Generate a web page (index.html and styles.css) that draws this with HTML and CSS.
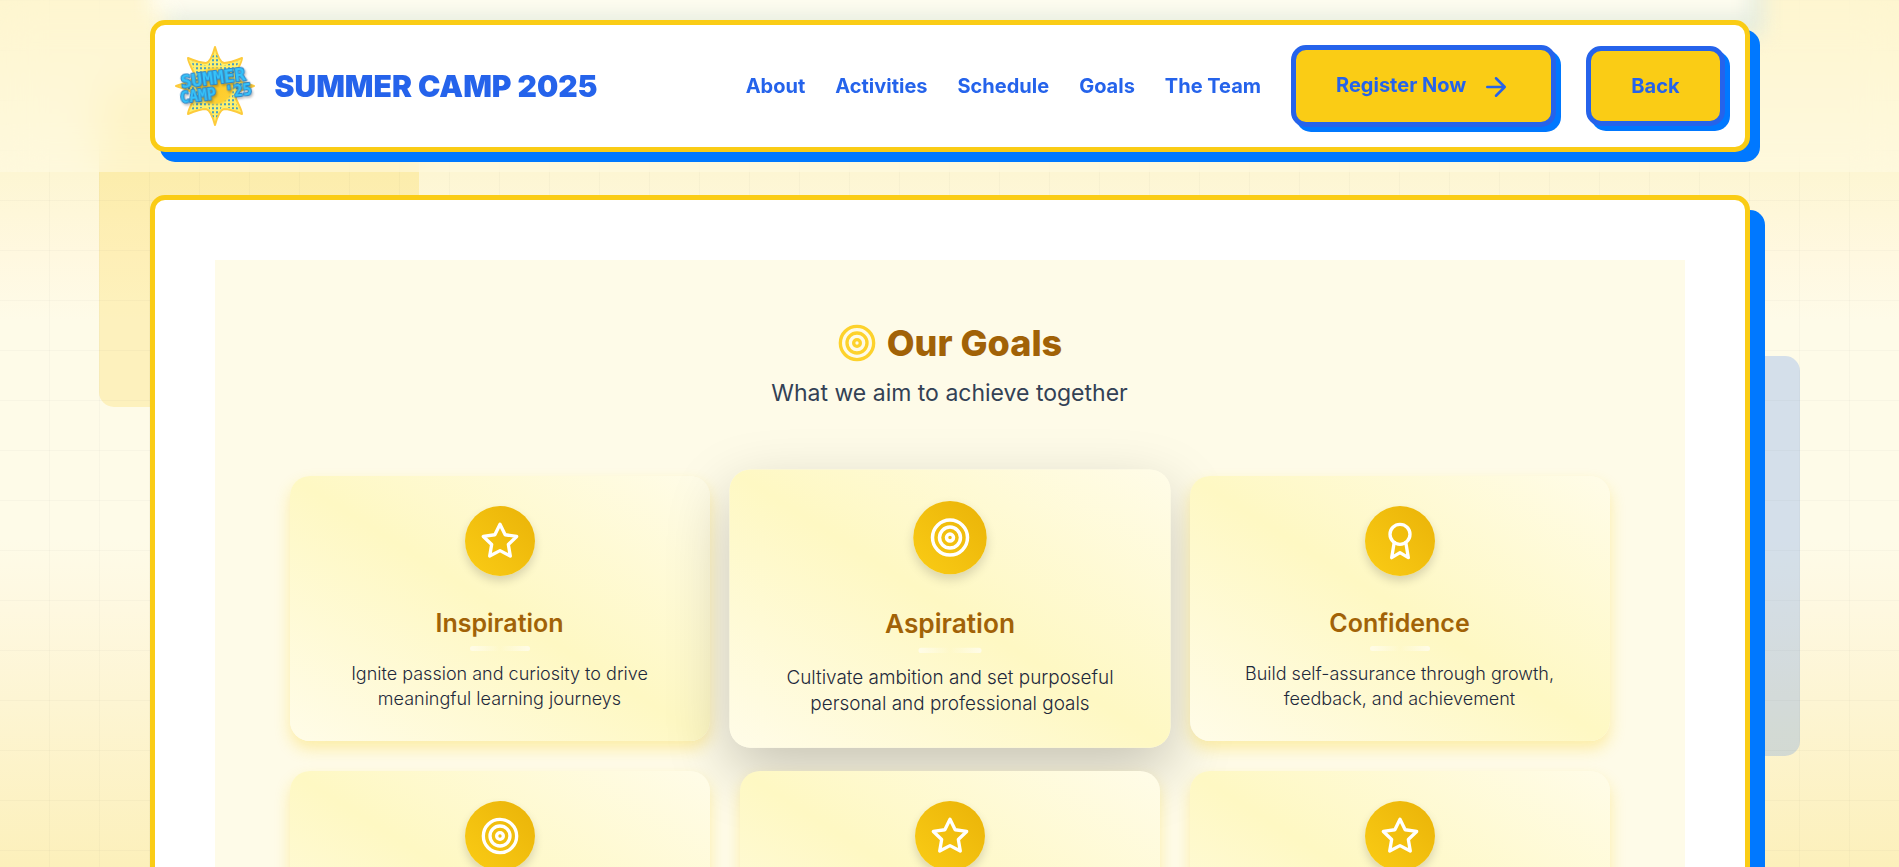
FILE: index.html
```html
<!DOCTYPE html>
<html lang="en">
<head>
<meta charset="utf-8">
<title>Summer Camp 2025</title>
<link rel="stylesheet" href="styles.css">
</head>
<body>
<svg class="sprite" aria-hidden="true">
  <symbol id="star" viewBox="0 0 24 24"><path d="M12 2l3.09 6.26L22 9.27l-5 4.87 1.18 6.88L12 17.77l-6.18 3.25L7 14.14 2 9.27l6.91-1.01L12 2z"/></symbol>
  <symbol id="target" viewBox="0 0 24 24"><circle cx="12" cy="12" r="10"/><circle cx="12" cy="12" r="6"/><circle cx="12" cy="12" r="2"/></symbol>
  <symbol id="award" viewBox="0 0 24 24"><circle cx="12" cy="8" r="6"/><path d="M15.477 12.89 17 22l-5-3-5 3 1.523-9.11"/></symbol>
  <symbol id="arrow" viewBox="0 0 24 24"><path d="M5 12h14M12 5l7 7-7 7"/></symbol>
</svg>
<div class="backdrop" aria-hidden="true">
  <div class="block block-yellow"></div>
  <div class="block block-blue"></div>
  <div class="grid-lines"></div>
</div>
<header class="site-header">
  <div class="previous-panel" aria-hidden="true"></div>
  <div class="bar">
    <a class="brand" href="#top">
      <svg class="logo" viewBox="0 0 80 80" aria-hidden="true">
        <defs>
          <pattern id="dots" width="4" height="4" patternUnits="userSpaceOnUse"><rect x="1" y="1" width="2" height="2.4" rx="1" fill="#3f9cc4"/></pattern>
          <radialGradient id="glow"><stop offset="0" stop-color="#ffc928"/><stop offset=".85" stop-color="#fdd033"/><stop offset="1" stop-color="#fdd033" stop-opacity="0"/></radialGradient>
        </defs>
        <path d="M40 1Q44 16 49 17Q55 17 67 12Q68 13 61 27Q61 33 67 36L79 40L67 44Q61 47 61 53Q68 67 67 68Q55 63 49 63Q44 64 40 79Q36 64 31 63Q25 63 13 68Q12 67 19 53Q19 47 13 44L1 40L13 36Q19 33 19 27Q12 13 13 12Q25 17 31 17Q36 16 40 1z" fill="#fff06a" stroke="#fdcb3c" stroke-width="2"/>
        <path d="M40 5 47 20 64 15 58 30 73 40 58 50 64 65 47 60 40 75 33 60 16 65 22 50 7 40 22 30 16 15 33 20z" fill="url(#dots)"/>
        <circle cx="40" cy="40" r="20" fill="url(#glow)"/>
        <g class="logo-word" transform="rotate(-7 40 40)">
          <text class="logo-top" x="39" y="38">SUMMER</text>
          <text class="logo-bottom" x="40" y="53">CAMP '25</text>
        </g>
      </svg>
      <span class="brand-name">SUMMER CAMP 2025</span>
    </a>
    <nav class="nav" aria-label="Main">
      <a href="#about">About</a>
      <a href="#activities">Activities</a>
      <a href="#schedule">Schedule</a>
      <a href="#goals">Goals</a>
      <a href="#team">The Team</a>
      <button class="btn" type="button">Register Now<svg class="btn-icon" aria-hidden="true"><use href="#arrow"/></svg></button>
      <button class="btn" type="button">Back</button>
    </nav>
  </div>
</header>
<main class="panel">
  <section class="goals" id="goals">
    <div class="heading">
      <h2><svg class="heading-icon" aria-hidden="true"><use href="#target"/></svg>Our Goals</h2>
      <p>What we aim to achieve together</p>
    </div>
    <div class="cards">
      <article class="card"><span class="badge"><svg><use href="#star"/></svg></span><h3>Inspiration</h3><p>Ignite passion and curiosity to drive meaningful learning journeys</p></article>
      <article class="card card-active"><span class="badge"><svg><use href="#target"/></svg></span><h3>Aspiration</h3><p>Cultivate ambition and set purposeful personal and professional goals</p></article>
      <article class="card"><span class="badge"><svg><use href="#award"/></svg></span><h3>Confidence</h3><p>Build self-assurance through growth, feedback, and achievement</p></article>
      <article class="card"><span class="badge"><svg><use href="#target"/></svg></span></article>
      <article class="card"><span class="badge"><svg><use href="#star"/></svg></span></article>
      <article class="card"><span class="badge"><svg><use href="#star"/></svg></span></article>
    </div>
  </section>
</main>
</body>
</html>
```
FILE: styles.css
```css
* { box-sizing: border-box; }

body {
  margin: 0;
  font-family: Inter, "Liberation Sans", sans-serif;
  font-size: 20px;
  line-height: 30px;
  color: #334155;
  background: #fefbe8;
}

h2, h3, p { margin: 0; }

.sprite { position: absolute; width: 0; height: 0; }

svg { fill: none; stroke-linecap: round; stroke-linejoin: round; }

.backdrop {
  position: fixed;
  inset: 0;
  z-index: -1;
  overflow: hidden;
  background: linear-gradient(180deg, #fcf0b8 0, #fdf6d3 172px, #fff8e0 255px, #fefbe8 320px, #fefbe8 540px, #fef8e0 610px, #fdf5d3 700px, #fcf0bb 867px);
}

.block { position: absolute; border-radius: 15px; }

.block-yellow {
  top: 87px;
  left: 99px;
  width: 320px;
  height: 320px;
  background: rgba(250, 204, 21, .2);
}

.block-blue {
  top: 356px;
  right: 99px;
  width: 400px;
  height: 400px;
  background: rgba(20, 100, 245, .18);
}

.grid-lines {
  position: absolute;
  inset: 0;
  background:
    linear-gradient(180deg, rgba(0, 0, 0, .025) 1px, transparent 1px) 0 0 / 50px 50px,
    repeating-linear-gradient(90deg, transparent 0 49px, rgba(0, 0, 0, .025) 49px 50px);
}

.site-header {
  position: relative;
  padding: 20px 40px;
  overflow: hidden;
  background: rgba(255, 252, 232, .5);
  backdrop-filter: blur(20px);
}

.previous-panel {
  position: absolute;
  z-index: -1;
  inset: -60px 150px auto;
  height: 75px;
  background: #fffdf0;
  box-shadow: 15px 20px 0 #e3ebdf;
  filter: blur(10px);
}

.bar {
  max-width: 1600px;
  margin: 0 auto;
  padding: 20px;
  display: flex;
  align-items: center;
  justify-content: space-between;
  background: #fff;
  border: 5px solid #facc15;
  border-radius: 15px;
  box-shadow: 10px 10px 0 #0078ff;
}

.brand {
  display: flex;
  align-items: center;
  gap: 20px;
  color: #2563eb;
  text-decoration: none;
}

.logo { width: 80px; height: 80px; overflow: visible; }

.logo-word {
  font-family: "DejaVu Sans Mono", monospace;
  font-weight: 700;
  text-anchor: middle;
  fill: #35c3fa;
  stroke: #2f86c8;
  stroke-width: 2px;
  paint-order: stroke;
  filter: drop-shadow(1px 2px 1px rgba(0, 0, 0, .25));
}

.logo-top { font-size: 18px; }

.logo-bottom { font-size: 15px; }

.brand-name { font-size: 30px; font-weight: 900; }

.nav {
  display: flex;
  align-items: center;
  gap: 30px;
  font-weight: 700;
}

.nav a { color: #2563eb; text-decoration: none; }

.btn {
  padding: 20px 40px;
  font: inherit;
  color: #2563eb;
  background: #facc15;
  border: 5px solid #2563eb;
  border-radius: 15px;
  box-shadow: 5px 5px 0 #0078ff;
}

.btn-icon {
  width: 30px;
  height: 30px;
  margin-left: 15px;
  vertical-align: middle;
  stroke: currentColor;
  stroke-width: 2;
}

.panel {
  position: relative;
  max-width: 1600px;
  margin: 23px auto 60px;
  padding: 60px;
  background: #fff;
  border: 5px solid #facc15;
  border-radius: 15px;
  box-shadow: 15px 15px 0 #0078ff;
}

.goals {
  padding: 60px 75px 75px;
  background: #fefbe8;
}

.heading {
  display: grid;
  gap: 10px;
  justify-items: center;
  padding-bottom: 65px;
}

.heading h2 {
  display: flex;
  align-items: center;
  gap: 10px;
  font-size: 36px;
  line-height: 46px;
  font-weight: 800;
  color: #a16207;
}

.heading-icon { width: 40px; height: 40px; stroke: #fdd22c; stroke-width: 2; }

.heading p { font-size: 23px; line-height: 35px; }

.cards {
  display: grid;
  grid-template-columns: repeat(3, 1fr);
  gap: 30px;
}

.card {
  position: relative;
  min-height: 265px;
  padding: 30px;
  display: flex;
  flex-direction: column;
  align-items: center;
  text-align: center;
  border-radius: 20px;
  background: linear-gradient(to top right, #fffce8, #fef8c3, #fffce8);
  box-shadow: 0 8px 15px rgba(250, 204, 21, .3);
}

.card-active {
  transform: scale(1.05);
  box-shadow: 0 22px 60px rgba(0, 0, 0, .22);
}

.badge {
  width: 70px;
  height: 70px;
  margin-bottom: 30px;
  display: grid;
  place-items: center;
  border-radius: 50%;
  background: linear-gradient(to top right, #facc15, #eab308);
  box-shadow: 0 5px 10px rgba(0, 0, 0, .15);
}

.badge svg { width: 40px; height: 40px; stroke: #fff; stroke-width: 2; }

.card h3 {
  font-size: 25px;
  line-height: 35px;
  font-weight: 600;
  color: #a16207;
}

.card h3::after {
  content: "";
  display: block;
  width: 60px;
  height: 5px;
  margin: 5px auto 10px;
  border-radius: 3px;
  background: linear-gradient(90deg, #fffce8, rgba(255, 252, 232, 0), #fffce8);
}

.card p { font-size: 18px; line-height: 25px; font-weight: 300; color: #1e293b; }
```
